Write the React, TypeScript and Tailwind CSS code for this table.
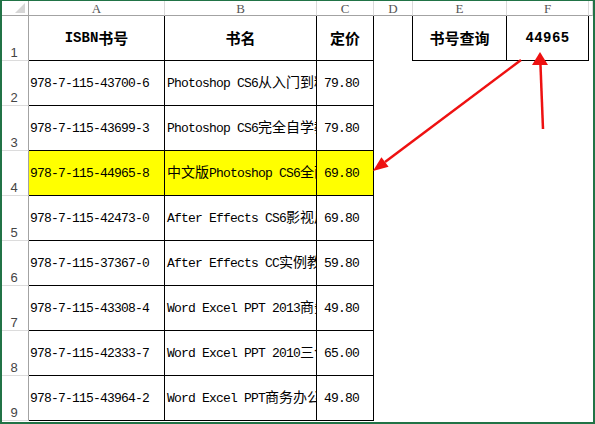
import React from 'react'

const books = [
  { isbn: '978-7-115-43700-6', title: 'Photoshop CS6从入门到精通', price: '79.80' },
  { isbn: '978-7-115-43699-3', title: 'Photoshop CS6完全自学教程', price: '79.80' },
  { isbn: '978-7-115-44965-8', title: '中文版Photoshop CS6全面自学教程', price: '69.80', hit: true },
  { isbn: '978-7-115-42473-0', title: 'After Effects CS6影视后期制作', price: '69.80' },
  { isbn: '978-7-115-37367-0', title: 'After Effects CC实例教程', price: '59.80' },
  { isbn: '978-7-115-43308-4', title: 'Word Excel PPT 2013商务办公', price: '49.80' },
  { isbn: '978-7-115-42333-7', title: 'Word Excel PPT 2010三合一', price: '65.00' },
  { isbn: '978-7-115-43964-2', title: 'Word Excel PPT商务办公从入门到精通', price: '49.80' },
]

const columns = ['A', 'B', 'C', 'D', 'E', 'F', '']

// split latin / CJK runs so the CJK glyphs get full-width sizing like SimSun
const Mixed: React.FC<{ text: string; bold?: boolean }> = ({ text, bold }) => {
  const parts = text.split(/([\u3000-\u9fff\uff00-\uffef]+)/).filter(Boolean)
  return (
    <>
      {parts.map((part, i) =>
        /[\u3000-\u9fff\uff00-\uffef]/.test(part) ? (
          <span
            key={i}
            className={
              bold
                ? "relative -top-[1px] font-['Noto_Sans_CJK_SC',sans-serif] text-[15px] font-bold tracking-[0px]"
                : "relative -top-[2px] font-['Noto_Sans_CJK_SC',sans-serif] text-[14px] tracking-[0px]"
            }
          >
            {part}
          </span>
        ) : (
          <span key={i}>{part}</span>
        ),
      )}
    </>
  )
}

const bodyText = "font-['Liberation_Mono',monospace] text-[13px] leading-none tracking-[-0.8px] text-black whitespace-nowrap overflow-hidden"
const headText = "font-['Liberation_Mono',monospace] text-[14px] leading-none font-bold text-black whitespace-nowrap"

const RowNum: React.FC<{ n: number }> = ({ n }) => (
  <div className="flex items-end justify-center border-r border-b border-r-[#a3a3a3] border-b-[#dcdcdc] pb-[1px] pr-[2px] font-['Liberation_Sans',sans-serif] text-[13px] leading-none text-[#444]">
    {n}
  </div>
)

const App: React.FC = () => {
  return (
    <div className="relative h-[424px] w-[595px] overflow-hidden border-t border-r-2 border-b-2 border-l-2 border-[#217346] bg-white">
      <div className="grid grid-cols-[27px_136px_152px_57px_39px_94px_82px_1fr] grid-rows-[15px_repeat(9,45px)]">
        {/* column headers */}
        <div className="relative border-r border-b border-r-[#a3a3a3] border-b-[#a3a3a3]">
          <div className="absolute right-[3px] bottom-[2px] h-0 w-0 border-b-[10px] border-l-[10px] border-b-[#d6d6d6] border-l-transparent" />
        </div>
        {columns.map((c, i) => (
          <div
            key={i}
            className="flex items-center justify-center border-r border-b border-r-[#dadada] border-b-[#a3a3a3] font-['Liberation_Serif',serif] text-[13px] leading-none text-[#555]"
          >
            {c}
          </div>
        ))}

        {/* row 1 */}
        <RowNum n={1} />
        <div className={`flex items-center justify-center border-r border-b border-black ${headText}`}>
          <Mixed text="ISBN书号" bold />
        </div>
        <div className={`flex items-center justify-center border-r border-b border-black ${headText}`}>
          <Mixed text="书名" bold />
        </div>
        <div className={`flex items-center justify-center border-r border-b border-black ${headText}`}>
          <Mixed text="定价" bold />
        </div>
        <div className="border-r border-black" />
        <div className={`flex items-center justify-center border-r border-b border-black ${headText}`}>
          <Mixed text="书号查询" bold />
        </div>
        <div className={`flex items-center justify-center border-r border-b border-black ${headText} tracking-[0.4px]`}>
          44965
        </div>
        <div />

        {books.map((b, i) => (
          <React.Fragment key={b.isbn}>
            <RowNum n={i + 2} />
            <div className={`flex items-center border-r border-b border-black pl-[1px] ${bodyText} ${b.hit ? 'bg-[#ffff00]' : ''}`}>
              {b.isbn}
            </div>
            <div className={`flex items-center border-r border-b border-black pl-[2px] ${bodyText} ${b.hit ? 'bg-[#ffff00]' : ''}`}>
              <Mixed text={b.title} />
            </div>
            <div className={`flex items-center border-r border-b border-black pl-[7px] ${bodyText} ${b.hit ? 'bg-[#ffff00]' : ''}`}>
              {b.price}
            </div>
            <div />
            <div />
            <div />
            <div />
          </React.Fragment>
        ))}
      </div>

      {/* annotation arrows */}
      <svg className="pointer-events-none absolute top-[-1px] left-[-2px]" width="595" height="424">
        <line x1="521" y1="60" x2="385" y2="162" stroke="#ee1111" strokeWidth="2.5" />
        <polygon points="373,171 388.6,166.8 381.4,157.2" fill="#ee1111" />
        <line x1="543" y1="129" x2="540.4" y2="63" stroke="#ee1111" strokeWidth="2.5" />
        <polygon points="540,52 532,65 548,65" fill="#ee1111" />
      </svg>
    </div>
  )
}

export default App
